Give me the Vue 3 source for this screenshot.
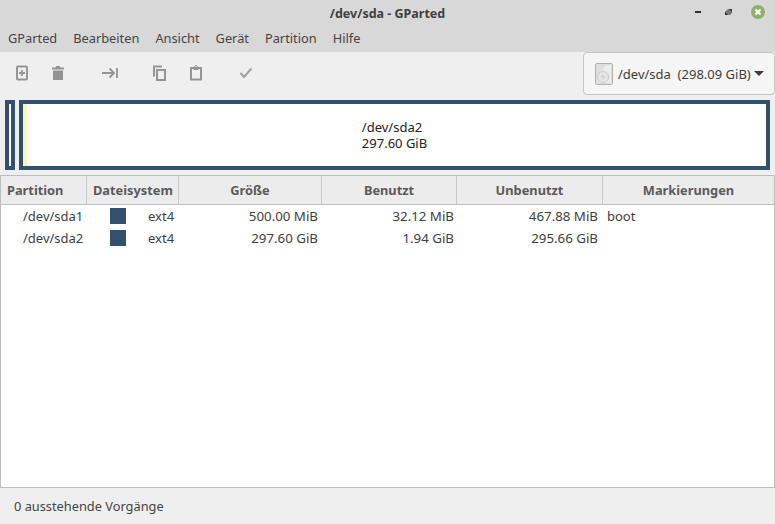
<script setup>
const menus = ['GParted', 'Bearbeiten', 'Ansicht', 'Gerät', 'Partition', 'Hilfe']
const cols = [
  { label: 'Partition', cls: 'left' },
  { label: 'Dateisystem', cls: 'left' },
  { label: 'Größe' },
  { label: 'Benutzt' },
  { label: 'Unbenutzt' },
  { label: 'Markierungen' }
]
const rows = [
  { name: '/dev/sda1', fs: 'ext4', size: '500.00 MiB', used: '32.12 MiB', free: '467.88 MiB', flags: 'boot' },
  { name: '/dev/sda2', fs: 'ext4', size: '297.60 GiB', used: '1.94 GiB', free: '295.66 GiB', flags: '' }
]
</script>

<template>
  <div class="window">
    <header class="titlebar">
      <span class="title">/dev/sda - GParted</span>
      <div class="controls">
        <svg width="14" height="14" viewBox="0 0 14 14"><rect x="4" y="6" width="6" height="2" fill="#333" /></svg>
        <svg width="14" height="14" viewBox="0 0 14 14"><path d="M7.500 4H11v3.500zM4 6.500 7.500 10H4z" fill="#333" /><path d="M5 6 7 4h.5L11 7.500V8l-2 2H7.500L4 6.500z" fill="#777" /></svg>
        <svg width="14" height="14" viewBox="0 0 14 14"><circle cx="7" cy="7" r="7" fill="#8fb069" /><path d="m4.500 4.500 5 5m0-5-5 5" stroke="#fff" stroke-width="2" /></svg>
      </div>
    </header>
    <nav class="menubar">
      <span v-for="m in menus" :key="m" class="menu">{{ m }}</span>
    </nav>
    <div class="toolbar">
      <div class="tools">
        <svg class="t1" width="16" height="16" viewBox="0 0 16 16" fill="none"><rect x="3" y="1.500" width="10" height="13" rx="1" stroke="#949494" stroke-width="2" /><path d="M8 5v6M5 8h6" stroke="#949494" stroke-width="1.800" /></svg>
        <svg class="t2" width="16" height="16" viewBox="0 0 16 16"><path d="M2 2.500h3.500l1-1.500h3l1 1.500H14v2H2zM3 5.500h10V15H3z" fill="#949494" /></svg>
        <svg class="t3" width="18" height="16" viewBox="0 0 18 16" fill="none"><path d="M1 8h12M8.500 3.500 13 8l-4.500 4.500M16 3v10" stroke="#949494" stroke-width="1.800" /></svg>
        <svg class="t4" width="16" height="16" viewBox="0 0 16 16" fill="none"><path d="M11 1.500H3v10" stroke="#949494" stroke-width="2" /><rect x="6" y="5" width="8" height="10" stroke="#949494" stroke-width="2" /></svg>
        <svg class="t5" width="16" height="16" viewBox="0 0 16 16" fill="none"><rect x="3" y="3" width="10" height="11.500" stroke="#949494" stroke-width="2" /><rect x="5.500" y="2" width="5" height="3" fill="#949494" /><circle cx="8" cy="1.800" r="1.300" stroke="#949494" /></svg>
        <svg class="t6" width="16" height="16" viewBox="0 0 16 16" fill="none"><path d="m2.500 8 3.500 4 7.500-8.500" stroke="#a0a0a0" stroke-width="2" /></svg>
      </div>
      <div class="device">
        <svg width="18" height="22" viewBox="0 0 18 22"><rect x=".5" y=".5" width="17" height="21" rx="1" fill="#dedede" stroke="#b0b0b0" /><path d="M2 14 11 2h5v18H5a5 5 0 0 1-3-6" fill="#ececec" /><circle cx="8" cy="14" r="5.500" fill="#e6e6e6" stroke="#c8c8c8" /><circle cx="8" cy="14" r="2" fill="#d0d0d0" /></svg>
        <span class="devname">/dev/sda&nbsp; (298.09 GiB)</span>
        <span class="arrow"></span>
      </div>
    </div>
    <div class="diskmap">
      <div class="part small"><div class="fill"></div></div>
      <div class="part large">
        <div class="used"></div>
        <div class="label"><div>/dev/sda2</div><div>297.60 GiB</div></div>
      </div>
    </div>
    <div class="table">
      <div class="row head">
        <div v-for="c in cols" :key="c.label" class="hcell" :class="c.cls">{{ c.label }}</div>
      </div>
      <div v-for="r in rows" :key="r.name" class="row body">
        <div class="cell name">{{ r.name }}</div>
        <div class="cell fs"><i class="swatch"></i><span>{{ r.fs }}</span></div>
        <div class="cell num">{{ r.size }}</div>
        <div class="cell num">{{ r.used }}</div>
        <div class="cell num">{{ r.free }}</div>
        <div class="cell flags">{{ r.flags }}</div>
      </div>
    </div>
    <footer class="status">0 ausstehende Vorgänge</footer>
  </div>
</template>

<style>
html, body { margin: 0; background: #efefef; }
</style>

<style scoped>
.window {
  width: 775px;
  height: 524px;
  display: flex;
  flex-direction: column;
  background: #efefef;
  color: #3d3d3d;
  font-family: "Noto Sans", "Open Sans", sans-serif;
  font-size: 13px;
  overflow: hidden;
}
.titlebar {
  height: 26px;
  flex: none;
  background: #d8d8d8;
  display: flex;
  align-items: center;
  justify-content: center;
  position: relative;
}
.title { font-weight: 700; font-size: 12.500px; color: #404040; }
.controls {
  position: absolute;
  right: 10px;
  top: 5px;
  display: flex;
  gap: 16px;
  align-items: center;
}
.menubar {
  height: 26px;
  box-sizing: border-box;
  padding-bottom: 2px;
  flex: none;
  background: #d8d8d8;
  display: flex;
  align-items: center;
  padding-left: 8px;
  gap: 16px;
  color: #444;
  font-size: 12.800px;
}
.toolbar {
  height: 48px;
  flex: none;
  display: flex;
  justify-content: space-between;
}
.tools {
  display: flex;
  align-items: center;
  padding-left: 14px;
  height: 42px;
}
.t2 { margin-left: 20px; }
.t3 { margin-left: 35px; }
.t4 { margin-left: 32px; }
.t5 { margin-left: 21px; }
.t6 { margin-left: 34px; }
.device {
  width: 192px;
  height: 43px;
  box-sizing: border-box;
  border: 1px solid #c4c4c4;
  border-radius: 4px;
  background: #f5f5f5;
  display: flex;
  align-items: center;
  padding-left: 11px;
  gap: 5px;
  color: #3d3d3d;
}
.devname { white-space: nowrap; }
.arrow {
  width: 0;
  height: 0;
  border-left: 5px solid transparent;
  border-right: 5px solid transparent;
  border-top: 5px solid #3d3d3d;
  margin-left: -2px;
}
.diskmap {
  height: 70px;
  flex: none;
  display: flex;
  gap: 4px;
  padding: 0 5px;
}
.part {
  box-sizing: border-box;
  border: 4px solid #34506f;
  background: #fff;
}
.small { width: 10px; }
.large {
  flex: 1;
  display: flex;
  position: relative;
  justify-content: center;
  align-items: center;
}
.used {
  position: absolute;
  left: 0;
  top: 0;
  bottom: 0;
  width: 4px;
  background: #f7f7b8;
}
.label {
  font-size: 13px;
  line-height: 16px;
  color: #222;
}
.table {
  flex: 1;
  margin-top: 5px;
  background: #fff;
  border: 1px solid #bdbdbd;
}
.row {
  display: grid;
  grid-template-columns: 86px 92px 143px 135px 146px 1fr;
}
.head {
  height: 28px;
  background: #ececec;
  border-bottom: 1px solid #c0c0c0;
}
.hcell {
  font-weight: 700;
  font-size: 12.800px;
  color: #5a5a5a;
  display: flex;
  align-items: center;
  justify-content: center;
  border-right: 1px solid #c8c8c8;
}
.hcell:last-child { border-right: 0; }
.hcell.left { justify-content: flex-start; padding-left: 6px; }
.body { height: 22px; }
.cell { display: flex; align-items: center; color: #3d3d3d; white-space: nowrap; }
.name { padding-left: 22px; }
.fs { padding-left: 23px; gap: 22px; }
.swatch { width: 16px; height: 16px; background: #34506f; display: block; flex: none; }
.num { justify-content: flex-end; padding-right: 4px; font-size: 13.300px; }
.num:nth-child(4) { padding-right: 3px; }
.num:nth-child(5) { padding-right: 5px; }
.flags { padding-left: 4px; }
.status {
  height: 36px;
  box-sizing: border-box;
  padding-bottom: 1px;
  flex: none;
  display: flex;
  align-items: center;
  padding-left: 14px;
  color: #444;
  font-size: 12.800px;
}
</style>
